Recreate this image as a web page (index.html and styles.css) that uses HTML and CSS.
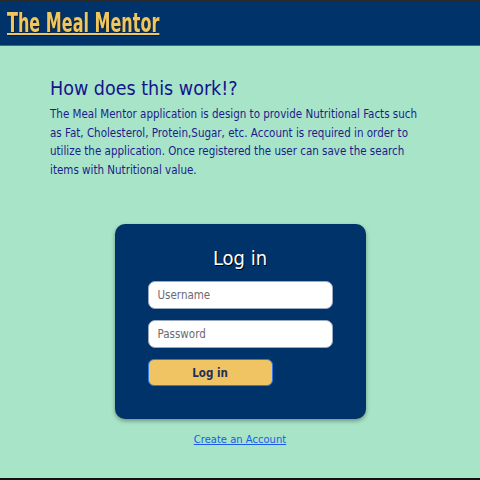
FILE: index.html
```html
<!DOCTYPE html>
<html>
<head>
<meta charset="utf-8">
<link rel="stylesheet" href="styles.css">
</head>
<body>
<div class="page">
  <header class="topbar">
    <a class="brand" href="#">The Meal Mentor</a>
  </header>
  <main class="content">
    <section class="intro">
      <h2 class="intro-title">How does this work!?</h2>
      <p class="intro-text">The Meal Mentor application is design to provide Nutritional Facts such as Fat, Cholesterol, Protein,Sugar, etc. Account is required in order to utilize the application. Once registered the user can save the search items with Nutritional value.</p>
    </section>
    <form class="login-card">
      <h3 class="login-title">Log in</h3>
      <input class="field" type="text" placeholder="Username">
      <input class="field" type="password" placeholder="Password">
      <button class="login-btn" type="button">Log in</button>
    </form>
    <a class="create-link" href="#">Create an Account</a>
  </main>
</div>
</body>
</html>
```
FILE: styles.css
```css
html, body {
  margin: 0;
  padding: 0;
}
body {
  font-family: "DejaVu Sans Condensed", "DejaVu Sans", Verdana, sans-serif;
}
.page {
  box-sizing: border-box;
  height: 480px;
  background: #a8e4c8;
  border-top: 1px solid #2a2a2a;
  border-bottom: 2px solid #111;
  display: flex;
  flex-direction: column;
}
.topbar {
  height: 44px;
  background: #00336a;
  border-bottom: 1px solid #3d6a8c;
  display: flex;
  align-items: center;
  padding-left: 7px;
}
.brand {
  display: inline-block;
  font-family: "DejaVu Sans Condensed", "DejaVu Sans", sans-serif;
  font-weight: bold;
  font-size: 27px;
  line-height: 30px;
  color: #f0c75e;
  text-decoration: underline;
  text-decoration-thickness: 2px;
  text-shadow: 1px 1px 1px #1a1a1a;
  transform: scaleX(0.66);
  transform-origin: left center;
  white-space: nowrap;
}
.content {
  display: flex;
  flex-direction: column;
  align-items: center;
}
.intro {
  align-self: stretch;
  padding: 0 50px;
}
.intro-title {
  margin: 31px 0 5px;
  font-weight: normal;
  font-size: 19.5px;
  color: #14148c;
}
.intro-text {
  margin: 0;
  font-size: 11.5px;
  line-height: 18.5px;
  color: #1c1c8c;
  width: 375px;
}
.login-card {
  margin-top: 45px;
  box-sizing: border-box;
  width: 251px;
  background: #00336a;
  border-radius: 10px;
  box-shadow: 0 2px 4px rgba(0,0,0,0.35);
  padding: 22px 33px 33px;
  display: flex;
  flex-direction: column;
  gap: 11px;
}
.login-title {
  margin: 0;
  text-align: center;
  color: #ffffff;
  font-weight: normal;
  font-size: 20px;
  text-shadow: 1px 1px 0 #000;
}
.field {
  box-sizing: border-box;
  height: 28px;
  border: 1px solid #9aa8c0;
  border-radius: 7px;
  padding: 0 9px;
  font-family: "DejaVu Sans Condensed", "DejaVu Sans", sans-serif;
  font-size: 11.5px;
  background: #fff;
}
.field::placeholder {
  color: #6a6a72;
}
.login-btn {
  box-sizing: border-box;
  width: 125px;
  height: 27px;
  background: #f0c462;
  border: 1px solid #2a7ae8;
  border-radius: 6px;
  font-family: "DejaVu Sans Condensed", "DejaVu Sans", sans-serif;
  font-weight: bold;
  font-size: 11.5px;
  color: #1e2f5a;
}
.create-link {
  margin-top: 15px;
  font-family: "DejaVu Sans", sans-serif;
  font-size: 10px;
  color: #1a5ce6;
  text-decoration: underline;
}
```
